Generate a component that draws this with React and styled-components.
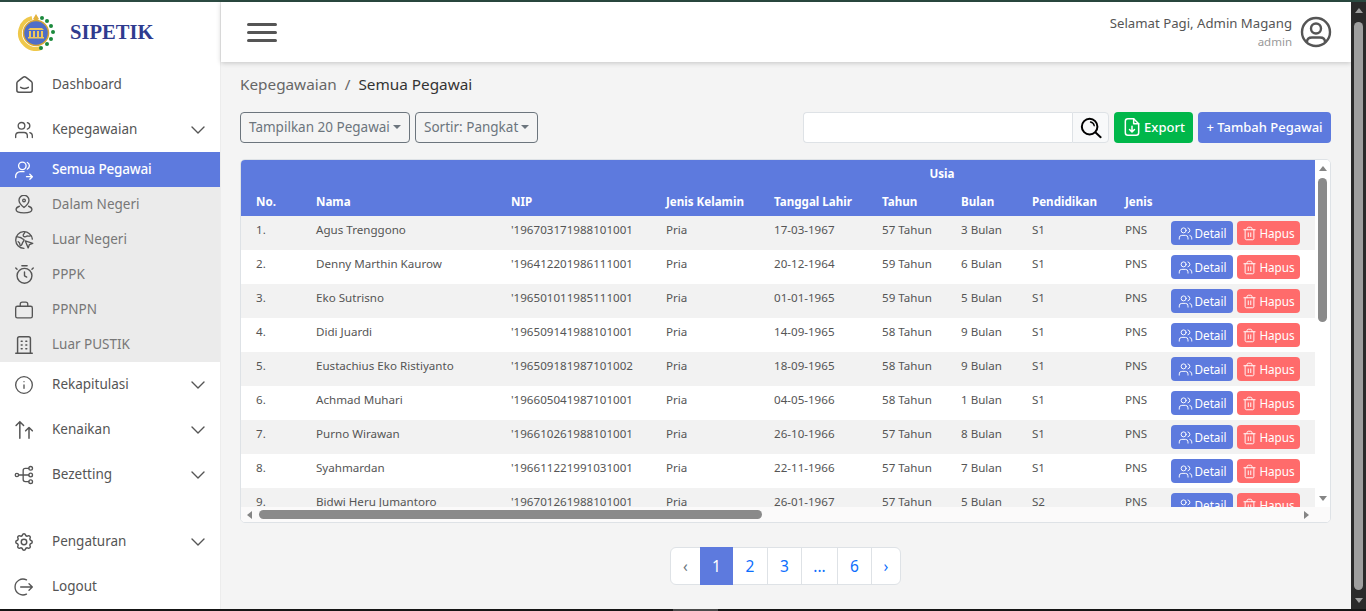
import React from 'react';
import styled, { createGlobalStyle } from 'styled-components';
import { TbSmartHome, TbSettings, TbBuilding } from 'react-icons/tb';
import { LuInfo, LuTrash2, LuUsers } from 'react-icons/lu';

const PRIMARY = '#5d7ade';
const FONT = '"Noto Sans", "Open Sans", sans-serif';

const GlobalStyle = createGlobalStyle`
  html, body {
    margin: 0;
    height: 100%;
    overflow: hidden;
    background: #2a2a2a;
  }
  * { box-sizing: border-box; }
  body {
    font-family: ${FONT};
    font-size: 13.5px;
    color: #555;
  }
`;

const Frame = styled.div`
  height: 611px;
  display: flex;
  flex-direction: column;
`;

const WindowEdge = styled.div`
  height: 2px;
  flex: none;
  background: ${(props) => (props.$top ? '#2b4a41' : '#151515')};
`;

const TaskHint = styled.div`
  width: 45px;
  height: 2px;
  margin-left: 673px;
  background: #4a4a4a;
`;

const Viewport = styled.div`
  height: 607px;
  flex: none;
  display: flex;
  background: #f4f4f4;
`;

const Arrow = styled.i`
  display: block;
  width: 0;
  height: 0;
  flex: none;
  border-style: solid;
  border-color: transparent;
  border-width: ${(props) =>
    props.$dir === 'up' ? '0 4.500px 5px' : props.$dir === 'down' ? '5px 4.500px 0' : props.$dir === 'left' ? '4.500px 5px 4.500px 0' : '4.500px 0 4.500px 5px'};
  ${(props) => {
    const side = { up: 'bottom', down: 'top', left: 'right', right: 'left' }[props.$dir];
    return `border-${side}-color: ${props.$color};`;
  }}
`;

const ArrowBox = styled.div`
  width: ${(props) => (props.$wide ? '17px' : '15px')};
  height: ${(props) => (props.$wide ? '15px' : '17px')};
  flex: none;
  display: flex;
  align-items: center;
  justify-content: center;
`;

const PageBar = styled.div`
  width: 15px;
  flex: none;
  display: flex;
  flex-direction: column;
  align-items: center;
  justify-content: space-between;
  background: #2a2a2a;
`;

const PageThumb = styled.div`
  width: 9px;
  height: 568px;
  border-radius: 5px;
  background: #9f9f9f;
`;

const Sidebar = styled.aside`
  width: 221px;
  flex: none;
  display: flex;
  flex-direction: column;
  background: #fff;
  border-right: 1px solid #ececec;
`;

const Brand = styled.div`
  height: 60px;
  flex: none;
  display: flex;
  align-items: center;
  gap: 15px;
  padding-left: 17px;
`;

const BrandName = styled.span`
  font-family: "Liberation Serif", serif;
  font-size: 20.6px;
  font-weight: 700;
  color: #2f3b8f;
`;

const IconSlot = styled.span`
  width: 18px;
  height: 18px;
  flex: none;
  display: flex;
  align-items: center;
  justify-content: center;

  svg { flex: none; }
`;

const Label = styled.span`
  flex: 1;
  margin-top: -2px;
`;

const NavItem = styled.div`
  height: 45px;
  flex: none;
  display: flex;
  align-items: center;
  gap: 19px;
  padding: 0 15px;
  color: #555;
  margin-top: ${(props) => (props.$pushed ? 'auto' : '0')};
`;

const SubMenu = styled.div`
  display: flex;
  flex-direction: column;
  background: #ebebeb;
`;

const SubItem = styled.div`
  height: 35px;
  display: flex;
  align-items: center;
  gap: 19px;
  padding: 0 15px;
  color: ${(props) => (props.$active ? '#fff' : '#777')};
  background: ${(props) => (props.$active ? PRIMARY : 'transparent')};
  font-weight: ${(props) => (props.$active ? 500 : 400)};
  letter-spacing: ${(props) => (props.$active ? '-0.2px' : '0')};

  ${IconSlot} { color: ${(props) => (props.$active ? '#fff' : '#555')}; }
`;

const Main = styled.main`
  flex: 1;
  min-width: 0;
  display: flex;
  flex-direction: column;
`;

const TopBar = styled.header`
  height: 60px;
  flex: none;
  display: flex;
  align-items: center;
  justify-content: space-between;
  padding: 0 19px 0 26px;
  background: #fff;
  box-shadow: 0 1px 5px rgba(0, 0, 0, 0.2);
`;

const Burger = styled.div`
  width: 30px;
  display: flex;
  flex-direction: column;
  gap: 5px;

  i {
    display: block;
    height: 3px;
    border-radius: 2px;
    background: #555;
  }
`;

const UserBox = styled.div`
  display: flex;
  align-items: center;
  gap: 8px;
`;

const UserText = styled.div`
  text-align: right;
  line-height: 18px;
  font-size: 13.2px;

  small {
    display: block;
    margin-top: 1px;
    font-size: 11.5px;
    color: #999;
  }
`;

const Body = styled.div`
  flex: 1;
  padding: 0 20px 0 19px;
`;

const Crumbs = styled.div`
  height: 50px;
  padding-bottom: 6px;
  display: flex;
  align-items: center;
  gap: 8px;
  font-size: 15.3px;
  color: #666;

  b { font-weight: 400; color: #333; }
`;

const Toolbar = styled.div`
  height: 31px;
  display: flex;
  gap: 5px;
`;

const Dropdown = styled.div`
  height: 31px;
  display: flex;
  align-items: center;
  justify-content: space-between;
  width: ${(props) => props.$width}px;
  padding: 0 8px 2px;
  border: 1px solid #6c757d;
  border-radius: 4px;
  color: #6c757d;

  &::after {
    content: '';
    border-top: 4px solid #6c757d;
    border-left: 4px solid transparent;
    border-right: 4px solid transparent;
  }
`;

const SearchGroup = styled.div`
  margin-left: auto;
  display: flex;
`;

const SearchInput = styled.input`
  width: 269px;
  height: 31px;
  border: 1px solid #dee2e6;
  border-right: 0;
  border-radius: 4px 0 0 4px;
  background: #fff;
  outline: 0;
`;

const SearchAddon = styled.div`
  width: 37px;
  height: 31px;
  display: flex;
  align-items: center;
  justify-content: center;
  border: 1px solid #dee2e6;
  border-radius: 0 4px 4px 0;
  background: #f8f9fa;
`;

const ActionButton = styled.div`
  width: ${(props) => props.$width}px;
  height: 31px;
  display: flex;
  align-items: center;
  justify-content: center;
  gap: 2px;
  padding-bottom: 2px;
  border-radius: 4px;
  font-size: 13px;
  color: #fff;
  font-weight: 500;
  background: ${(props) => props.$bg};
`;

const TableCard = styled.section`
  margin-top: 16px;
  height: 364px;
  display: grid;
  grid-template-columns: 1fr 15px;
  grid-template-rows: 347px 15px;
  border: 1px solid #dee2e6;
  border-radius: 5px;
  background: #fff;
  overflow: hidden;
`;

const TableView = styled.div`
  overflow: hidden;
`;

const VerticalBar = styled.div`
  display: flex;
  flex-direction: column;
  align-items: center;
  background: #fff;
`;

const VerticalThumb = styled.div`
  width: 9px;
  height: 144px;
  margin-top: 1px;
  margin-bottom: auto;
  border-radius: 5px;
  background: #8a8a8a;
`;

const HorizontalBar = styled.div`
  grid-column: 1 / 3;
  display: flex;
  align-items: center;
  padding-right: 15px;
  background: #fbfafa;
`;

const HorizontalThumb = styled.div`
  height: 9px;
  width: 503px;
  margin-left: 1px;
  margin-right: auto;
  border-radius: 5px;
  background: #8a8a8a;
`;

const Table = styled.table`
  width: 100%;
  table-layout: fixed;
  border-collapse: collapse;
  font-size: 11.6px;
`;

const HeadCell = styled.th`
  height: 28px;
  padding: ${(props) => (props.$center ? '0 0 2px' : '0 0 2px 15px')};
  background: ${PRIMARY};
  color: #fff;
  font-weight: 700;
  text-align: ${(props) => (props.$center ? 'center' : 'left')};
  white-space: nowrap;
`;

const Row = styled.tr`
  background: ${(props) => (props.$striped ? '#f2f2f2' : '#fff')};
`;

const Cell = styled.td`
  height: 34px;
  padding: 6px 0 0 15px;
  vertical-align: top;
  line-height: 16px;
  color: #555;
  white-space: nowrap;
`;

const RowActions = styled.div`
  margin-top: -1px;
  display: flex;
  gap: 4px;
`;

const RowButton = styled.div`
  width: ${(props) => props.$width}px;
  height: 24px;
  display: flex;
  align-items: center;
  justify-content: center;
  gap: 2px;
  border-radius: 4px;
  font-size: 11.7px;
  color: #fff;
  background: ${(props) => props.$bg};
`;

const Pager = styled.nav`
  margin: 24px auto 0;
  width: max-content;
  display: flex;
  height: 38px;
  background: #fff;
  border: 1px solid #dee2e6;
  border-radius: 6px;
  font-size: 15.5px;
  color: #0d6efd;
`;

const PageLink = styled.div`
  width: ${(props) => props.$width}px;
  display: flex;
  align-items: center;
  justify-content: center;
  border-left: ${(props) => (props.$plain ? '0' : '1px solid #dee2e6')};
  color: ${(props) => (props.$active ? '#fff' : props.$muted ? '#6c757d' : '#0d6efd')};
  background: ${(props) => (props.$active ? PRIMARY : 'transparent')};
  margin: ${(props) => (props.$active ? '-1px 0' : '0')};
`;

const Glyph = ({ size = 20, width = 1.6, children }) => (
  <svg
    width={size}
    height={size}
    viewBox="0 0 24 24"
    fill="none"
    stroke="currentColor"
    strokeWidth={width}
    strokeLinecap="round"
    strokeLinejoin="round"
  >
    {children}
  </svg>
);

const Chevron = () => (
  <svg width="14" height="8" viewBox="0 0 14 8" fill="none" stroke="#555" strokeWidth="1.4" strokeLinecap="round" strokeLinejoin="round">
    <path d="M1 1l6 6 6-6" />
  </svg>
);

const UserArrowIcon = () => (
  <Glyph>
    <circle cx="10" cy="7" r="4.500" />
    <path d="M2 21v-1.500A5.500 5.500 0 0 1 7.500 14H12" />
    <path d="M15 20h7M19 17l3 3-3 3" />
    <path d="M16 3a4.500 4.500 0 0 1 0 8" />
  </Glyph>
);

const PinIcon = () => (
  <Glyph>
    <path d="M12 15s-6-4.600-6-8.700a6 6 0 0 1 12 0C18 10.400 12 15 12 15z" />
    <circle cx="12" cy="6.500" r="1.600" />
    <path d="M6.500 13.500C4 14.300 2.500 15.600 2.500 17.500c0 2.600 4.200 4 9.500 4s9.500-1.400 9.500-4c0-1.900-1.500-3.200-4-4" />
  </Glyph>
);

const GlobeCursorIcon = () => (
  <Glyph>
    <path d="M12 22A10 10 0 1 1 22 11" />
    <path d="M3 8c2 0 3 1 4.500 1s2 2 3.500 2 1 2 0 3-1 3-2 4-2 1-2-1-1-2-2-3" />
    <path d="M13 2.500c0 2-2 2-2 4s3 2 4 1 3 1 5-1" />
    <path d="M13.500 13l9 3-4 1.500-1.500 4z" />
  </Glyph>
);

const StopwatchIcon = () => (
  <Glyph size={21}>
    <circle cx="12" cy="13.500" r="8.500" />
    <path d="M12 9v4.500l2.500 1.500" />
    <path d="M9 2h6M3.500 6L2 4.500M20.500 6L22 4.500" />
  </Glyph>
);

const BagIcon = () => (
  <Glyph>
    <rect x="2" y="7.500" width="20" height="14" rx="2" />
    <path d="M7.500 7.500V5a2.500 2.500 0 0 1 2.500-2.500h4A2.500 2.500 0 0 1 16.500 5v2.500" />
  </Glyph>
);

const ArrowsUpIcon = () => (
  <Glyph width={1.8}>
    <path d="M7 22V2M2.500 6.500L7 2l4.500 4.500" />
    <path d="M18 22V9M14 13l4-4 4 4" />
  </Glyph>
);

const TreeIcon = () => (
  <Glyph>
    <circle cx="3.500" cy="12" r="2" />
    <circle cx="20" cy="4" r="2.200" />
    <circle cx="20" cy="12" r="2.200" />
    <circle cx="20" cy="20" r="2.200" />
    <path d="M5.500 12h12.300M11 12V6.500A2.500 2.500 0 0 1 13.500 4h4.300M11 12v5.500a2.500 2.500 0 0 0 2.500 2.500h4.300" />
  </Glyph>
);

const LogoutIcon = () => (
  <Glyph>
    <path d="M15 3.500A9.500 9.500 0 1 0 15 20.500" />
    <path d="M8 12h14M18 8l4 4-4 4" />
  </Glyph>
);

const SearchIcon = () => (
  <svg width="22" height="22" viewBox="0 0 24 24" fill="none" stroke="#000" strokeWidth="2.200" strokeLinecap="round">
    <circle cx="10.500" cy="10.500" r="8.500" />
    <path d="M17 17l5.500 5" />
    <path d="M11.500 5.500a5 5 0 0 1 4 4" strokeWidth="1.500" />
  </svg>
);

const ExportIcon = () => (
  <svg width="20" height="20" viewBox="0 0 24 24" fill="none" stroke="#fff" strokeWidth="1.800" strokeLinecap="round" strokeLinejoin="round">
    <path d="M14 2H7a3 3 0 0 0-3 3v14a3 3 0 0 0 3 3h10a3 3 0 0 0 3-3V8z" />
    <path d="M14 2v6h6" />
    <path d="M12 11v7M9 15l3 3 3-3" />
  </svg>
);

const AvatarIcon = () => (
  <svg width="32" height="32" viewBox="0 0 32 32" fill="none" stroke="#555" strokeWidth="2.400">
    <circle cx="16" cy="16" r="14" />
    <circle cx="16" cy="12.500" r="5" />
    <path d="M7 26c0-3.500 2-4.500 5-4.500h8c3 0 5 1 5 4.500" />
  </svg>
);

const Emblem = () => (
  <svg width="38" height="38" viewBox="0 0 38 38">
    <path d="M19 1l-3 5 3 2 3-2z" fill="#e3b23c" />
    <path d="M15 5A15.500 15.500 0 0 0 8 31.500 15.500 15.500 0 0 0 24 35" fill="none" stroke="#efc84a" strokeWidth="4" />
    <g fill="#1c8a3d">
      <circle cx="25" cy="5" r="2" />
      <circle cx="30" cy="8" r="2" />
      <circle cx="34" cy="13" r="2" />
      <circle cx="36" cy="19" r="2" />
      <circle cx="34" cy="26" r="2" />
      <circle cx="30" cy="31" r="2" />
      <circle cx="24" cy="35" r="2" />
    </g>
    <circle cx="19" cy="20" r="12.500" fill="#4f6ec7" stroke="#d9a632" strokeWidth="1.500" />
    <path d="M11 17h16l-2-2H13z" fill="#f0c75a" />
    <path d="M12 18h2v6h-2zM16 18h2v6h-2zM20 18h2v6h-2zM24 18h2v6h-2zM11 24h16v1.500H11z" fill="#f0c75a" />
  </svg>
);

const employees = [
  ['Agus Trenggono', "'196703171988101001", '17-03-1967', '57 Tahun', '3 Bulan', 'S1'],
  ['Denny Marthin Kaurow', "'196412201986111001", '20-12-1964', '59 Tahun', '6 Bulan', 'S1'],
  ['Eko Sutrisno', "'196501011985111001", '01-01-1965', '59 Tahun', '5 Bulan', 'S1'],
  ['Didi Juardi', "'196509141988101001", '14-09-1965', '58 Tahun', '9 Bulan', 'S1'],
  ['Eustachius Eko Ristiyanto', "'196509181987101002", '18-09-1965', '58 Tahun', '9 Bulan', 'S1'],
  ['Achmad Muhari', "'196605041987101001", '04-05-1966', '58 Tahun', '1 Bulan', 'S1'],
  ['Purno Wirawan', "'196610261988101001", '26-10-1966', '57 Tahun', '8 Bulan', 'S1'],
  ['Syahmardan', "'196611221991031001", '22-11-1966', '57 Tahun', '7 Bulan', 'S1'],
  ['Bidwi Heru Jumantoro', "'196701261988101001", '26-01-1967', '57 Tahun', '5 Bulan', 'S2'],
];

const columnWidths = [60, 195, 155, 108, 108, 79, 71, 93, 46, 159];

const App = () => (
  <>
    <GlobalStyle />
    <Frame>
      <WindowEdge $top />
      <Viewport>
        <Sidebar>
          <Brand>
            <Emblem />
            <BrandName>SIPETIK</BrandName>
          </Brand>
          <NavItem>
            <IconSlot><TbSmartHome size={23} strokeWidth={1.6} /></IconSlot>
            <Label>Dashboard</Label>
          </NavItem>
          <NavItem>
            <IconSlot><LuUsers size={20} strokeWidth={1.6} /></IconSlot>
            <Label>Kepegawaian</Label>
            <Chevron />
          </NavItem>
          <SubItem $active>
            <IconSlot><UserArrowIcon /></IconSlot>
            <Label>Semua Pegawai</Label>
          </SubItem>
          <SubMenu>
            <SubItem><IconSlot><PinIcon /></IconSlot><Label>Dalam Negeri</Label></SubItem>
            <SubItem><IconSlot><GlobeCursorIcon /></IconSlot><Label>Luar Negeri</Label></SubItem>
            <SubItem><IconSlot><StopwatchIcon /></IconSlot><Label>PPPK</Label></SubItem>
            <SubItem><IconSlot><BagIcon /></IconSlot><Label>PPNPN</Label></SubItem>
            <SubItem><IconSlot><TbBuilding size={22} strokeWidth={1.6} /></IconSlot><Label>Luar PUSTIK</Label></SubItem>
          </SubMenu>
          <NavItem>
            <IconSlot><LuInfo size={20} strokeWidth={1.6} /></IconSlot>
            <Label>Rekapitulasi</Label>
            <Chevron />
          </NavItem>
          <NavItem>
            <IconSlot><ArrowsUpIcon /></IconSlot>
            <Label>Kenaikan</Label>
            <Chevron />
          </NavItem>
          <NavItem>
            <IconSlot><TreeIcon /></IconSlot>
            <Label>Bezetting</Label>
            <Chevron />
          </NavItem>
          <NavItem $pushed>
            <IconSlot><TbSettings size={22} strokeWidth={1.6} /></IconSlot>
            <Label>Pengaturan</Label>
            <Chevron />
          </NavItem>
          <NavItem>
            <IconSlot><LogoutIcon /></IconSlot>
            <Label>Logout</Label>
          </NavItem>
        </Sidebar>
        <Main>
          <TopBar>
            <Burger><i /><i /><i /></Burger>
            <UserBox>
              <UserText>
                Selamat Pagi, Admin Magang
                <small>admin</small>
              </UserText>
              <AvatarIcon />
            </UserBox>
          </TopBar>
          <Body>
            <Crumbs>
              Kepegawaian <span>/</span> <b>Semua Pegawai</b>
            </Crumbs>
            <Toolbar>
              <Dropdown $width={170}>Tampilkan 20 Pegawai</Dropdown>
              <Dropdown $width={123}>Sortir: Pangkat</Dropdown>
              <SearchGroup>
                <SearchInput />
                <SearchAddon><SearchIcon /></SearchAddon>
              </SearchGroup>
              <ActionButton $width={79} $bg="#00b74a"><ExportIcon />Export</ActionButton>
              <ActionButton $width={133} $bg={PRIMARY}>+ Tambah Pegawai</ActionButton>
            </Toolbar>
            <TableCard>
              <TableView>
                <Table>
                  <colgroup>
                    {columnWidths.map((w, i) => <col key={i} style={{ width: w }} />)}
                  </colgroup>
                  <thead>
                    <tr>
                      <HeadCell colSpan={5} />
                      <HeadCell colSpan={2} $center>Usia</HeadCell>
                      <HeadCell colSpan={3} />
                    </tr>
                    <tr>
                      <HeadCell>No.</HeadCell>
                      <HeadCell>Nama</HeadCell>
                      <HeadCell>NIP</HeadCell>
                      <HeadCell>Jenis Kelamin</HeadCell>
                      <HeadCell>Tanggal Lahir</HeadCell>
                      <HeadCell>Tahun</HeadCell>
                      <HeadCell>Bulan</HeadCell>
                      <HeadCell>Pendidikan</HeadCell>
                      <HeadCell>Jenis</HeadCell>
                      <HeadCell />
                    </tr>
                  </thead>
                  <tbody>
                    {employees.map((p, i) => (
                      <Row key={p[1]} $striped={i % 2 === 0}>
                        <Cell>{i + 1}.</Cell>
                        <Cell>{p[0]}</Cell>
                        <Cell>{p[1]}</Cell>
                        <Cell>Pria</Cell>
                        <Cell>{p[2]}</Cell>
                        <Cell>{p[3]}</Cell>
                        <Cell>{p[4]}</Cell>
                        <Cell>{p[5]}</Cell>
                        <Cell>PNS</Cell>
                        <Cell>
                          <RowActions>
                            <RowButton $width={62} $bg={PRIMARY}>
                              <LuUsers size={15} strokeWidth={1.5} />Detail
                            </RowButton>
                            <RowButton $width={63} $bg="#ff6b6b">
                              <LuTrash2 size={15} strokeWidth={1.5} />Hapus
                            </RowButton>
                          </RowActions>
                        </Cell>
                      </Row>
                    ))}
                  </tbody>
                </Table>
              </TableView>
              <VerticalBar>
                <ArrowBox><Arrow $dir="up" $color="#858585" /></ArrowBox>
                <VerticalThumb />
                <ArrowBox><Arrow $dir="down" $color="#858585" /></ArrowBox>
              </VerticalBar>
              <HorizontalBar>
                <ArrowBox $wide><Arrow $dir="left" $color="#858585" /></ArrowBox>
                <HorizontalThumb />
                <ArrowBox $wide><Arrow $dir="right" $color="#858585" /></ArrowBox>
              </HorizontalBar>
            </TableCard>
            <Pager>
              <PageLink $width={29} $plain $muted>‹</PageLink>
              <PageLink $width={33} $plain $active>1</PageLink>
              <PageLink $width={34} $plain>2</PageLink>
              <PageLink $width={34}>3</PageLink>
              <PageLink $width={36}>...</PageLink>
              <PageLink $width={34}>6</PageLink>
              <PageLink $width={29}>›</PageLink>
            </Pager>
          </Body>
        </Main>
        <PageBar>
          <ArrowBox><Arrow $dir="up" $color="#9f9f9f" /></ArrowBox>
          <PageThumb />
          <ArrowBox><Arrow $dir="down" $color="#9f9f9f" /></ArrowBox>
        </PageBar>
      </Viewport>
      <WindowEdge><TaskHint /></WindowEdge>
    </Frame>
  </>
);

export default App;
